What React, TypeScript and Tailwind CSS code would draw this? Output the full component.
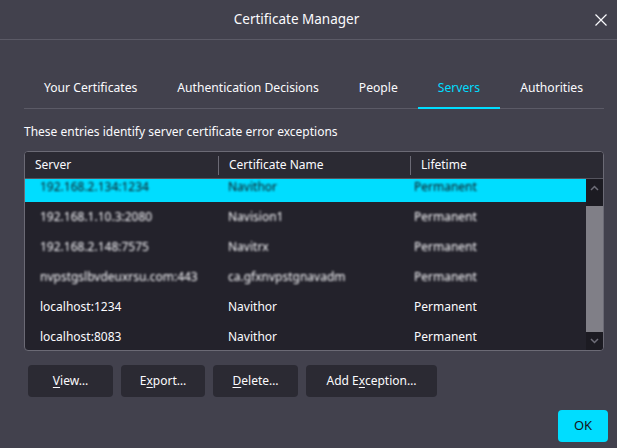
import React from 'react';

const tabs = ['Your Certificates', 'Authentication Decisions', 'People', 'Servers', 'Authorities'];

const rows = [
  { server: '192.168.2.134:1234', cert: 'Navithor', life: 'Permanent', hidden: true },
  { server: '192.168.1.10.3:2080', cert: 'Navision1', life: 'Permanent', hidden: true },
  { server: '192.168.2.148:7575', cert: 'Navitrx', life: 'Permanent', hidden: true },
  { server: 'nvpstgslbvdeuxrsu.com:443', cert: 'ca.gfxnvpstgnavadm', life: 'Permanent', hidden: true },
  { server: 'localhost:1234', cert: 'Navithor', life: 'Permanent', hidden: false },
  { server: 'localhost:8083', cert: 'Navithor', life: 'Permanent', hidden: false },
];

function Chevron({ up }: { up?: boolean }) {
  return (
    <svg width="9" height="6" viewBox="0 0 9 6" className="text-[#6e6d78]">
      <path d={up ? 'M1 5 L4.5 1.5 L8 5' : 'M1 1 L4.5 4.5 L8 1'} fill="none" stroke="currentColor" strokeWidth="1.5" />
    </svg>
  );
}

function Btn({ width, children }: { width: string; children: React.ReactNode }) {
  return (
    <button type="button" className={`${width} h-[32px] rounded-[4px] bg-[#2b2a33] text-[12px] text-[#fbfbfe] flex items-center justify-center whitespace-nowrap`}>
      {children}
    </button>
  );
}

export default function App() {
  return (
    <div className="w-[617px] h-[448px] bg-[#42414d] text-[#fbfbfe] flex flex-col overflow-hidden" style={{ fontFamily: '"Noto Sans", "Open Sans", sans-serif' }}>
      {/* title bar */}
      <div className="h-[40px] border-b border-[#5b5a66] flex items-center shrink-0">
        <div className="w-[593px] text-center text-[13.5px]">Certificate Manager</div>
        <button type="button" className="w-[24px] flex items-center">
          <svg width="12" height="12" viewBox="0 0 12 12" className="ml-[2px]">
            <path d="M0.5 0.5 L11.5 11.5 M11.5 0.5 L0.5 11.5" stroke="#fbfbfe" strokeWidth="1.2" />
          </svg>
        </button>
      </div>

      {/* tabs */}
      <div className="ml-6 mr-[13px] mt-[38px] flex border-b border-[#5b5a66] h-[31px]">
        {tabs.map((t) => (
          <div
            key={t}
            className={
              t === 'Servers'
                ? 'px-5 h-[31px] -mb-px pb-[8px] flex items-center whitespace-nowrap text-[12.15px] text-[#00ddff] border-b-2 border-[#00ddff]'
                : 'px-5 h-[30px] pb-[9px] flex items-center whitespace-nowrap text-[12.15px]'
            }
          >
            {t}
          </div>
        ))}
      </div>

      <div className="mx-6 mt-[14px] text-[12px] leading-[18px]">These entries identify server certificate error exceptions</div>

      {/* table */}
      <div className="ml-6 mr-[13px] mt-[10px] h-[200px] border border-[#6b6a75] rounded-[4px] overflow-hidden flex flex-col bg-[#23222b]">
        <div className="h-[27px] shrink-0 bg-[#2b2a33] border-b border-[#55545e] flex items-center text-[12px]">
          <div className="w-[193px] pl-[10px]">Server</div>
          <div className="w-px h-[19px] bg-[#6b6a75]" />
          <div className="w-[191px] pl-[10px]">Certificate Name</div>
          <div className="w-px h-[19px] bg-[#6b6a75]" />
          <div className="flex-1 pl-[10px]">Lifetime</div>
        </div>
        <div className="flex-1 flex min-h-0">
          <div className="flex-1 overflow-hidden">
            <div className="-mt-[7px]">
              {rows.map((r, i) => (
                <div
                  key={i}
                  className={`h-[30px] flex items-center text-[12px] whitespace-nowrap ${i === 0 ? 'bg-[#00ddff] text-[#15141a]' : ''}`}
                >
                  <div className={`w-[203px] pl-[15px] ${r.hidden ? 'blur-[1px]' : ''}`}>{r.server}</div>
                  <div className={`w-[186px] ${r.hidden ? 'blur-[1px]' : ''}`}>{r.cert}</div>
                  <div className={`flex-1 ${r.hidden ? 'blur-[1px]' : ''}`}>{r.life}</div>
                </div>
              ))}
            </div>
          </div>
          <div className="w-[17px] bg-[#1c1b22] flex flex-col">
            <div className="h-[17px] flex items-center justify-center"><Chevron up /></div>
            <div className="mt-[10px] h-[126px] bg-[#807f87]" />
            <div className="flex-1 flex items-center justify-center"><Chevron /></div>
          </div>
        </div>
      </div>

      {/* action buttons */}
      <div className="ml-[28px] mt-[14px] flex gap-2">
        <Btn width="w-[85px]"><span><u className="underline-offset-2">V</u>iew…</span></Btn>
        <Btn width="w-[84px]"><span>E<u className="underline-offset-2">x</u>port…</span></Btn>
        <Btn width="w-[85px]"><span><u className="underline-offset-2">D</u>elete…</span></Btn>
        <Btn width="w-[131px]"><span>Add E<u className="underline-offset-2">x</u>ception…</span></Btn>
      </div>

      <div className="mt-[13px] pr-[9px] flex justify-end">
        <button type="button" className="w-[50px] h-[32px] rounded-[4px] bg-[#00ddff] text-[#15141a] text-[13px]">OK</button>
      </div>
    </div>
  );
}
